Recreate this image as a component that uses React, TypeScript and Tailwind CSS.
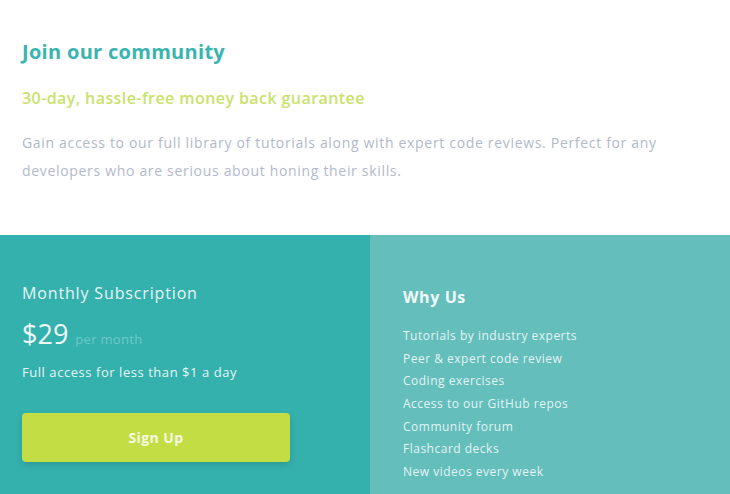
import React from "react";

const features = [
  "Tutorials by industry experts",
  "Peer & expert code review",
  "Coding exercises",
  "Access to our GitHub repos",
  "Community forum",
  "Flashcard decks",
  "New videos every week",
];

export default function App() {
  return (
    <div
      className="w-[730px] min-h-[494px] bg-white flex flex-col"
      style={{ fontFamily: "'Open Sans', 'Noto Sans', sans-serif" }}
    >
      <section className="px-[22px] pt-[38px] pb-[50px]">
        <h1 className="text-[20px] leading-[28px] font-bold tracking-[0.3px] text-[#3ab4b0]">
          Join our community
        </h1>
        <h2 className="mt-[20px] text-[16px] leading-[24px] font-semibold tracking-[0.42px] text-[#c9e26b]">
          30-day, hassle-free money back guarantee
        </h2>
        <p className="mt-[19px] text-[14px] leading-[28px] tracking-[0.68px] text-[#b1b9cb] max-w-[660px]">
          Gain access to our full library of tutorials along with expert code reviews. Perfect for any
          developers who are serious about honing their skills.
        </p>
      </section>
      <section className="grid grid-cols-[370px_1fr] flex-1 min-h-[259px]">
        <div className="bg-[#34b0ad] px-[22px] pt-[46px] flex flex-col">
          <h3 className="text-[16px] leading-[24px] font-medium text-[#e8f6f5] tracking-[0.85px]">
            Monthly Subscription
          </h3>
          <div className="mt-[13px] flex items-baseline gap-[7px]">
            <span className="text-[27px] leading-[32px] font-medium text-[#eef8f8]">$29</span>
            <span className="text-[13px] tracking-[0.3px] text-[#6ec9c6]">per month</span>
          </div>
          <p className="mt-[12px] text-[13px] leading-[20px] tracking-[0.55px] text-[#e6f5f4]">
            Full access for less than $1 a day
          </p>
          <button className="mt-[31px] w-[268px] h-[49px] rounded-[4px] bg-[#c3dd45] text-[14px] font-bold tracking-[0.4px] text-[#f4f9e0] shadow-[0_3px_6px_rgba(0,0,0,0.12)]">
            Sign Up
          </button>
        </div>
        <div className="bg-[#63bebc] pl-[33px] pt-[50px] flex flex-col">
          <h3 className="text-[16px] leading-[24px] font-bold tracking-[0.6px] text-[#f1f9f9]">Why Us</h3>
          <ul className="mt-[16px] text-[12px] leading-[22.67px] tracking-[0.5px] text-[#e4f4f3]">
            {features.map((f) => (
              <li key={f}>{f}</li>
            ))}
          </ul>
        </div>
      </section>
    </div>
  );
}
